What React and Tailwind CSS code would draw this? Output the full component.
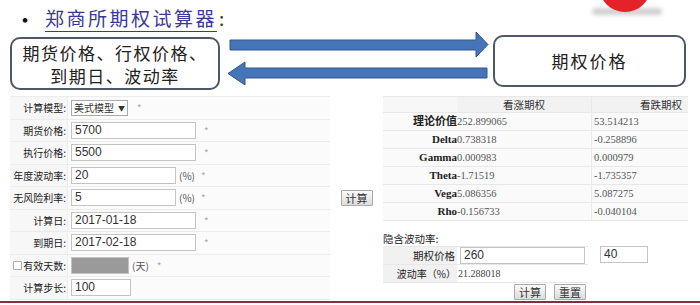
const cjk = "font-['Noto_Sans_CJK_SC','Liberation_Sans',sans-serif]";
const serif = "font-['Liberation_Serif','Noto_Sans_CJK_SC',serif]";
const arial = "font-['Liberation_Sans','Noto_Sans_CJK_SC',sans-serif]";

const Box = ({ w, value, gray }) => (
  <div
    className={`h-[17px] ${w} border border-[#c4c4c4] ${
      gray ? "bg-[#9a9a9a]" : "bg-white"
    } px-[3px] text-[12px] leading-[15px] text-[#333] whitespace-nowrap ${arial}`}
  >
    {value}
  </div>
);

const Star = ({ ml = "ml-[8px]" }) => (
  <span className={`${ml} text-[10px] text-[#aaa]`}>*</span>
);

const FormRow = ({ label, children, check }) => (
  <div className="flex h-[22.5px] border-b border-[#ececec]">
    <div
      className={`w-[58px] flex items-center ${
        check ? "justify-between pl-[3px]" : "justify-end"
      } pr-[1px] text-[10px] whitespace-nowrap text-[#222] bg-[#f7f7f7] border-r border-[#ececec]`}
    >
      {check && (
        <span className="w-[9px] h-[9px] border border-[#aaa] bg-white rounded-[1px]" />
      )}
      <span>{label}</span>
    </div>
    <div className="flex-1 flex items-center pl-[3px]">{children}</div>
  </div>
);

const Greek = ({ name, call, put }) => (
  <div className="flex h-[18px] border-b border-[#e8e8e8]">
    <div
      className={`w-[74px] flex items-center justify-end text-[11px] font-bold text-[#222] whitespace-nowrap ${serif}`}
    >
      {name}
    </div>
    <div
      className={`w-[135px] flex items-center text-[10.5px] text-[#555] border-r border-[#e8e8e8] ${serif}`}
    >
      {call}
    </div>
    <div className={`flex-1 flex items-center pl-[2px] text-[10.5px] text-[#555] ${serif}`}>
      {put}
    </div>
  </div>
);

const Btn = ({ children }) => (
  <div className="h-[16px] px-[4px] flex items-center border border-[#aaa] bg-gradient-to-b from-[#fafafa] to-[#dcdcdc] text-[11px] text-[#333] rounded-[1px] whitespace-nowrap">
    {children}
  </div>
);

export default function App() {
  return (
    <div className={`w-[700px] h-[305px] relative overflow-hidden bg-white ${cjk}`}>
      {/* decorative red ball peeking in from the top edge */}
      <div className="absolute left-[592px] top-[8px] w-[70px] h-[7px] rounded-full bg-[#cfcfcf] blur-[2px]" />
      <div className="absolute left-[599px] top-[-40px] w-[52px] h-[52px] rounded-full bg-[#e3222a]" />

      <div className="flex flex-col">
        <div className="h-[30px] flex items-center pl-[14px] pt-[6px]">
          <span className="w-[31px] text-[22px] leading-none text-[#111]">•</span>
          <span className="text-[19px] tracking-[2.5px] text-[#3a3a94] underline decoration-1 underline-offset-[5px]">
            郑商所期权试算器
          </span>
          <span className="text-[19px] text-[#333] ml-[2px]">:</span>
        </div>

        <div className="flex h-[58px] pl-[10px]">
          <div className="mt-[7px] w-[210px] h-[53px] border-2 border-[#4d5866] rounded-[10px] flex flex-col items-center justify-center text-[17px] leading-[23px] tracking-[1.5px] text-[#222] whitespace-nowrap">
            <span>期货价格、行权价格、</span>
            <span>到期日、波动率</span>
          </div>
          <svg width="270" height="58" viewBox="0 0 270 58" className="ml-[2px]">
            <path
              d="M8 10 H254 V2 L266 14.5 L254 27 V20 H8 Z"
              fill="#4674b8"
              stroke="#32568c"
              strokeWidth="1"
            />
            <path
              d="M265 38 H23 V32 L6 43.5 L23 55 V48 H265 Z"
              fill="#4674b8"
              stroke="#32568c"
              strokeWidth="1"
            />
          </svg>
          <div className="mt-[5px] ml-[1px] w-[193px] h-[52px] border-2 border-[#4d5866] rounded-[10px] flex items-center justify-center text-[17px] tracking-[2px] text-[#222]">
            期权价格
          </div>
        </div>

        <div className="flex mt-[8px] pl-[10px]">
          {/* left form */}
          <div className="w-[320px] flex flex-col border-t border-[#ececec] bg-[#fbfbfb]">
            <FormRow label="计算模型:">
              <div className="h-[16px] w-[57px] border border-[#aaa] bg-white flex items-center justify-between px-[2px] text-[10px] text-[#333] whitespace-nowrap">
                <span>美式模型</span>
                <span className="text-[7px]">▼</span>
              </div>
              <Star ml="ml-[9px]" />
            </FormRow>
            <FormRow label="期货价格:">
              <Box w="w-[125px]" value="5700" />
              <Star />
            </FormRow>
            <FormRow label="执行价格:">
              <Box w="w-[125px]" value="5500" />
              <Star />
            </FormRow>
            <FormRow label="年度波动率:">
              <Box w="w-[105px]" value="20" />
              <span className="ml-[3px] text-[10px] text-[#555]">(%)</span>
              <Star ml="ml-[6px]" />
            </FormRow>
            <FormRow label="无风险利率:">
              <Box w="w-[105px]" value="5" />
              <span className="ml-[3px] text-[10px] text-[#555]">(%)</span>
              <Star ml="ml-[6px]" />
            </FormRow>
            <FormRow label="计算日:">
              <Box w="w-[125px]" value="2017-01-18" />
              <Star />
            </FormRow>
            <FormRow label="到期日:">
              <Box w="w-[125px]" value="2017-02-18" />
              <Star />
            </FormRow>
            <FormRow label="有效天数:" check>
              <Box w="w-[58px]" value="" gray />
              <span className="ml-[3px] text-[10px] text-[#555]">(天)</span>
              <Star ml="ml-[8px]" />
            </FormRow>
            <FormRow label="计算步长:">
              <Box w="w-[60px]" value="100" />
            </FormRow>
          </div>

          {/* middle button */}
          <div className="w-[53px] flex items-center justify-center">
            <Btn>计算</Btn>
          </div>

          {/* right results */}
          <div className="w-[305px] flex flex-col">
            <div className="bg-[#fafafa] border-t border-[#e8e8e8]">
              <div className="flex h-[16px] border-b border-[#e8e8e8] bg-[#f2f2f2] text-[10.5px] text-[#333]">
                <div className="w-[74px] bg-[#f7f7f7]" />
                <div className="w-[135px] flex items-center justify-center border-r border-[#e8e8e8]">
                  看涨期权
                </div>
                <div className="flex-1 flex items-center justify-end pr-[6px]">看跌期权</div>
              </div>
              <Greek name="理论价值" call="252.899065" put="53.514213" />
              <Greek name="Delta" call="0.738318" put="-0.258896" />
              <Greek name="Gamma" call="0.000983" put="0.000979" />
              <Greek name="Theta" call="-1.71519" put="-1.735357" />
              <Greek name="Vega" call="5.086356" put="5.087275" />
              <Greek name="Rho" call="-0.156733" put="-0.040104" />
            </div>

            <div className="mt-[10px] h-[15px] flex items-center text-[10.5px] text-[#222]">
              隐含波动率:
            </div>
            <div className="flex flex-col w-[205px] border-t border-[#e8e8e8]">
              <div className="flex h-[18px] border-b border-[#e8e8e8]">
                <div className="w-[74px] bg-[#f1f1f1] flex items-center justify-end pr-[2px] text-[10.5px] text-[#222] whitespace-nowrap">
                  期权价格
                </div>
                <div className="flex-1 flex items-center pl-[3px]">
                  <Box w="w-[125px]" value="260" />
                </div>
              </div>
              <div className="flex h-[18px] border-b border-[#e8e8e8]">
                <div className="w-[74px] bg-[#f1f1f1] flex items-center justify-end pr-[1px] text-[10px] text-[#222] whitespace-nowrap">
                  波动率（%）
                </div>
                <div className={`flex-1 flex items-center pl-[1px] text-[10px] text-[#444] ${serif}`}>
                  21.288018
                </div>
              </div>
            </div>
            <div className="flex w-[205px] justify-end gap-[8px] pr-[2px] mt-[1px]">
              <Btn>计算</Btn>
              <Btn>重置</Btn>
            </div>
          </div>
        </div>
      </div>

      {/* second price input sits beside the iv table */}
      <div className="absolute left-[600px] top-[246px]">
        <Box w="w-[48px]" value="40" />
      </div>

      <div className="absolute left-0 right-0 bottom-[2px] h-[2px] bg-[#8e2b3c]" />
    </div>
  );
}
